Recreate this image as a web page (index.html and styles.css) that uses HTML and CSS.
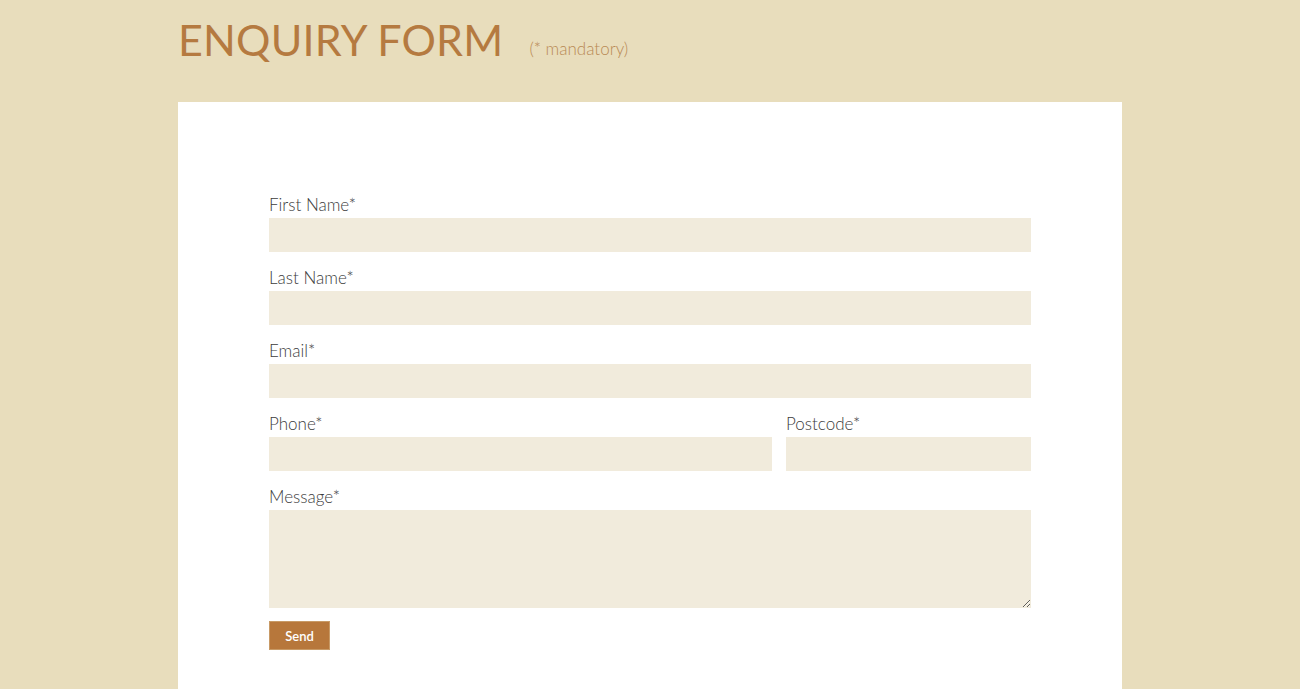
FILE: index.html
```html
<!DOCTYPE html>
<html lang="en">
<head>
<meta charset="utf-8">
<title>Enquiry Form</title>
<link rel="stylesheet" href="styles.css">
</head>
<body>
<div class="page">
  <header class="header">
    <h1 class="title">ENQUIRY FORM</h1>
    <span class="note">(* mandatory)</span>
  </header>
  <main class="card">
    <form class="form">
      <div class="field">
        <label class="label" for="fn">First Name*</label>
        <input class="input" id="fn" type="text">
      </div>
      <div class="field">
        <label class="label" for="ln">Last Name*</label>
        <input class="input" id="ln" type="text">
      </div>
      <div class="field">
        <label class="label" for="em">Email*</label>
        <input class="input" id="em" type="email">
      </div>
      <div class="row">
        <div class="field phone">
          <label class="label" for="ph">Phone*</label>
          <input class="input" id="ph" type="text">
        </div>
        <div class="field postcode">
          <label class="label" for="pc">Postcode*</label>
          <input class="input" id="pc" type="text">
        </div>
      </div>
      <div class="field">
        <label class="label" for="msg">Message*</label>
        <textarea class="input textarea" id="msg"></textarea>
      </div>
      <button class="send" type="button">Send</button>
    </form>
  </main>
</div>
</body>
</html>
```

FILE: styles.css
```css
* { box-sizing: border-box; }
html, body { margin: 0; padding: 0; }
body {
  background: #e8ddbc;
  font-family: "Lato", "Noto Sans", sans-serif;
  height: 689px;
  overflow: hidden;
}
.page {
  width: 944px;
  margin: 0 auto;
}
.header {
  display: flex;
  align-items: baseline;
  height: 102px;
  padding-top: 14px;
}
.title {
  margin: 0;
  font-weight: 400;
  font-size: 43px;
  line-height: 52px;
  color: #b57a40;
  letter-spacing: 0.2px;
}
.note {
  margin-left: 26px;
  font-size: 17px;
  font-weight: 300;
  color: #b98a55;
  position: relative;
  top: -1px;
}
.card {
  background: #fff;
  padding: 93px 91px 40px;
  min-height: 600px;
}
.form {
  display: flex;
  flex-direction: column;
}
.field {
  display: flex;
  flex-direction: column;
  margin-bottom: 16px;
}
.label {
  font-size: 17px;
  font-weight: 300;
  line-height: 20px;
  padding-bottom: 3px;
  color: #3c3c3c;
}
.input {
  border: none;
  background: #f1ebdc;
  height: 34px;
  padding: 0 8px;
  font: inherit;
  outline: none;
}
.textarea {
  height: 98px;
  resize: vertical;
}
.row {
  display: flex;
  gap: 14px;
}
.phone { flex: 0 0 503px; }
.postcode { flex: 1; }
.send {
  align-self: flex-start;
  width: 61px;
  height: 29px;
  margin-top: -3px;
  background: #b7773b;
  color: #fff;
  border: 1px solid #c89a66;
  font-family: inherit;
  font-size: 13px;
  font-weight: 600;
  cursor: pointer;
}
```
